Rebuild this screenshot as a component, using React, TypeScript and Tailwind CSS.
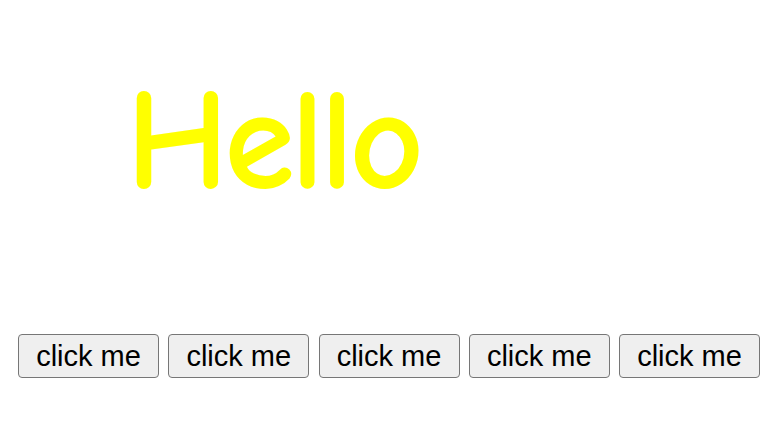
export default function App() {
  const buttons = [1, 2, 3, 4, 5];

  return (
    <div className="h-[423px] w-[782px] bg-white">
      <h1
        className="pl-[126px] pt-[72px] text-[144px] font-black leading-[138px] tracking-[-4.5px] text-[#ffff00]"
        style={{ fontFamily: '"Comic Sans MS", "Comic Neue", Lato, sans-serif' }}
      >
        Hello
      </h1>

      <div className="mt-[124px] flex gap-[9.25px] pl-[18px]">
        {buttons.map((b) => (
          <button
            key={b}
            type="button"
            className="h-[44px] w-[141px] rounded-[4px] border border-[#767676] bg-[#efefef] text-[29px] leading-none text-black"
            style={{ fontFamily: '"Liberation Sans", Arial, sans-serif' }}
          >
            click me
          </button>
        ))}
      </div>
    </div>
  );
}
